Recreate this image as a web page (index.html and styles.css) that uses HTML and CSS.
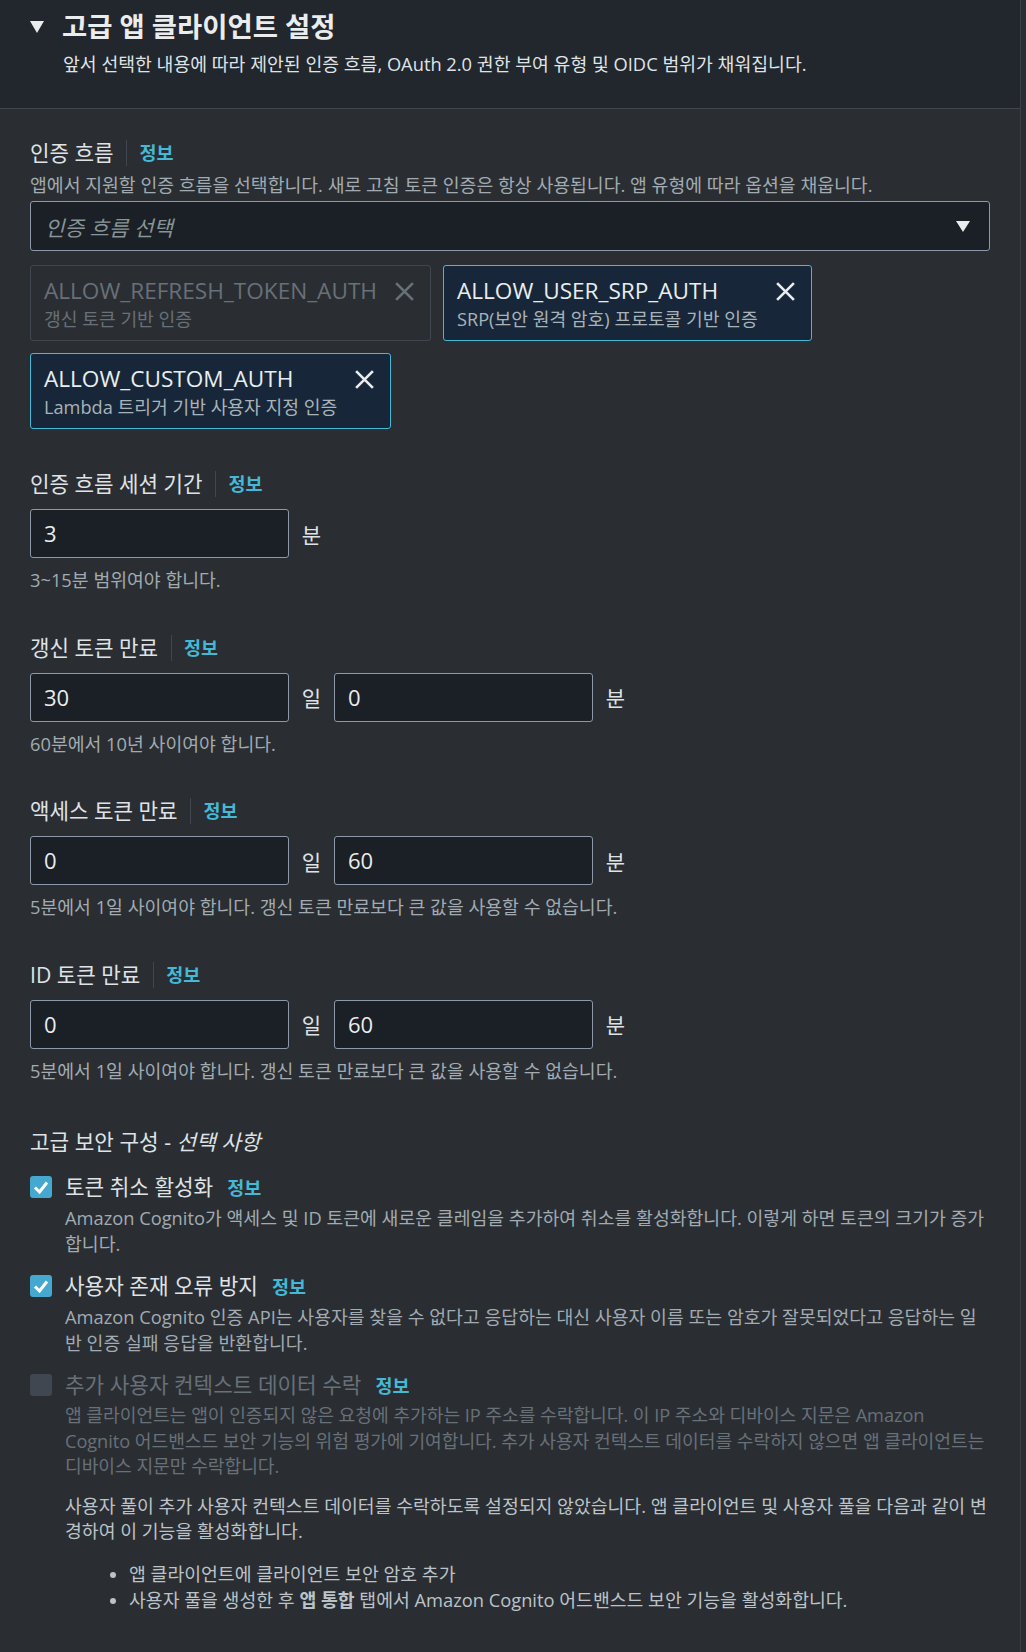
FILE: index.html
```html
<!DOCTYPE html>
<html lang="ko">
<head>
<meta charset="utf-8">
<title>고급 앱 클라이언트 설정</title>
<link rel="stylesheet" href="styles.css">
</head>
<body>
<div class="page">
  <header class="exp-header">
    <div class="exp-title-row">
      <span class="caret"></span>
      <h2 class="exp-title">고급 앱 클라이언트 설정</h2>
    </div>
    <p class="exp-desc">앞서 선택한 내용에 따라 제안된 인증 흐름, OAuth 2.0 권한 부여 유형 및 OIDC 범위가 채워집니다.</p>
  </header>

  <div class="content">
    <section class="field">
      <div class="label-row"><span class="label">인증 흐름</span><span class="divider"></span><a class="info">정보</a></div>
      <div class="desc">앱에서 지원할 인증 흐름을 선택합니다. 새로 고침 토큰 인증은 항상 사용됩니다. 앱 유형에 따라 옵션을 채웁니다.</div>
      <div class="select">
        <span class="placeholder">인증 흐름 선택</span>
        <span class="select-caret"></span>
      </div>
      <div class="tokens">
        <div class="token disabled">
          <div class="token-text">
            <div class="token-title">ALLOW_REFRESH_TOKEN_AUTH</div>
            <div class="token-sub">갱신 토큰 기반 인증</div>
          </div>
          <svg class="token-x" viewBox="0 0 20 20"><path d="M2 2 L18 18 M18 2 L2 18"/></svg>
        </div>
        <div class="token">
          <div class="token-text">
            <div class="token-title">ALLOW_USER_SRP_AUTH</div>
            <div class="token-sub">SRP(보안 원격 암호) 프로토콜 기반 인증</div>
          </div>
          <svg class="token-x" viewBox="0 0 20 20"><path d="M2 2 L18 18 M18 2 L2 18"/></svg>
        </div>
        <div class="token">
          <div class="token-text">
            <div class="token-title">ALLOW_CUSTOM_AUTH</div>
            <div class="token-sub">Lambda 트리거 기반 사용자 지정 인증</div>
          </div>
          <svg class="token-x" viewBox="0 0 20 20"><path d="M2 2 L18 18 M18 2 L2 18"/></svg>
        </div>
      </div>
    </section>

    <section class="field">
      <div class="label-row"><span class="label">인증 흐름 세션 기간</span><span class="divider"></span><a class="info">정보</a></div>
      <div class="input-row">
        <div class="input">3</div><span class="unit">분</span>
      </div>
      <div class="help">3~15분 범위여야 합니다.</div>
    </section>

    <section class="field">
      <div class="label-row"><span class="label">갱신 토큰 만료</span><span class="divider"></span><a class="info">정보</a></div>
      <div class="input-row">
        <div class="input">30</div><span class="unit">일</span>
        <div class="input">0</div><span class="unit">분</span>
      </div>
      <div class="help">60분에서 10년 사이여야 합니다.</div>
    </section>

    <section class="field">
      <div class="label-row"><span class="label">액세스 토큰 만료</span><span class="divider"></span><a class="info">정보</a></div>
      <div class="input-row">
        <div class="input">0</div><span class="unit">일</span>
        <div class="input">60</div><span class="unit">분</span>
      </div>
      <div class="help">5분에서 1일 사이여야 합니다. 갱신 토큰 만료보다 큰 값을 사용할 수 없습니다.</div>
    </section>

    <section class="field">
      <div class="label-row"><span class="label">ID 토큰 만료</span><span class="divider"></span><a class="info">정보</a></div>
      <div class="input-row">
        <div class="input">0</div><span class="unit">일</span>
        <div class="input">60</div><span class="unit">분</span>
      </div>
      <div class="help">5분에서 1일 사이여야 합니다. 갱신 토큰 만료보다 큰 값을 사용할 수 없습니다.</div>
    </section>

    <section class="security">
      <h3 class="sec-title">고급 보안 구성 - <em>선택 사항</em></h3>

      <div class="check">
        <span class="box checked"><svg viewBox="0 0 22 22"><path d="M5 11.5 L9.5 16 L17 6.5"/></svg></span>
        <div class="check-body">
          <div class="check-label">토큰 취소 활성화<a class="info">정보</a></div>
          <div class="check-desc">Amazon Cognito가 액세스 및 ID 토큰에 새로운 클레임을 추가하여 취소를 활성화합니다. 이렇게 하면 토큰의 크기가 증가합니다.</div>
        </div>
      </div>

      <div class="check">
        <span class="box checked"><svg viewBox="0 0 22 22"><path d="M5 11.5 L9.5 16 L17 6.5"/></svg></span>
        <div class="check-body">
          <div class="check-label">사용자 존재 오류 방지<a class="info">정보</a></div>
          <div class="check-desc">Amazon Cognito 인증 API는 사용자를 찾을 수 없다고 응답하는 대신 사용자 이름 또는 암호가 잘못되었다고 응답하는 일반 인증 실패 응답을 반환합니다.</div>
        </div>
      </div>

      <div class="check disabled">
        <span class="box"></span>
        <div class="check-body">
          <div class="check-label">추가 사용자 컨텍스트 데이터 수락<a class="info">정보</a></div>
          <div class="check-desc">앱 클라이언트는 앱이 인증되지 않은 요청에 추가하는 IP 주소를 수락합니다. 이 IP 주소와 디바이스 지문은 Amazon Cognito 어드밴스드 보안 기능의 위험 평가에 기여합니다. 추가 사용자 컨텍스트 데이터를 수락하지 않으면 앱 클라이언트는 디바이스 지문만 수락합니다.</div>
          <p class="note">사용자 풀이 추가 사용자 컨텍스트 데이터를 수락하도록 설정되지 않았습니다. 앱 클라이언트 및 사용자 풀을 다음과 같이 변경하여 이 기능을 활성화합니다.</p>
          <ul class="bullets">
            <li>앱 클라이언트에 클라이언트 보안 암호 추가</li>
            <li>사용자 풀을 생성한 후 <b>앱 통합</b> 탭에서 Amazon Cognito 어드밴스드 보안 기능을 활성화합니다.</li>
          </ul>
        </div>
      </div>
    </section>
  </div>
</div>
</body>
</html>
```

FILE: styles.css
```css
html, body {
  margin: 0;
  padding: 0;
  background: #2a2e33;
}
body {
  font-family: "Open Sans", "Noto Sans CJK KR", sans-serif;
  color: #d5dbdb;
  width: 1026px;
  height: 1652px;
  overflow: hidden;
}
.page {
  width: 1020px;
  min-height: 1652px;
  border-right: 1px solid #3c4149;
  background: #2a2e33;
}

/* header */
.exp-header {
  background: #22262d;
  border-bottom: 1px solid #41464e;
  padding: 11px 0 31px 30px;
}
.exp-title-row {
  display: flex;
  align-items: center;
  height: 32px;
}
.caret {
  width: 0;
  height: 0;
  border-left: 7.5px solid transparent;
  border-right: 7.5px solid transparent;
  border-top: 12px solid #eaeded;
  margin-right: 18px;
  margin-top: -1px;
}
.exp-title {
  margin: 0;
  font-size: 27.4px;
  font-weight: 700;
  line-height: 32px;
  color: #eaeded;
}
.exp-desc {
  margin: 8px 0 0 33px;
  font-size: 18.3px;
  line-height: 25.5px;
  color: #dfe3e6;
}

/* content */
.content {
  padding: 30px 30px 0 30px;
}
.field + .field {
  margin-top: 41px;
}
.label-row {
  display: flex;
  align-items: center;
  height: 28px;
}
.label {
  font-size: 21.2px;
  line-height: 28px;
  color: #dfe3e6;
}
.divider {
  width: 1px;
  height: 26px;
  background: #414750;
  margin: 0 12px 0 13px;
}
.info {
  font-size: 18.5px;
  font-weight: 700;
  color: #44b9d6;
  line-height: 28px;
}
.desc {
  margin-top: 5px;
  font-size: 18.3px;
  line-height: 25.5px;
  color: #a1abb1;
}
.select {
  margin-top: 4px;
  height: 50px;
  box-sizing: border-box;
  border: 1px solid #8d99a8;
  border-radius: 3px;
  background: #1b1f26;
  display: flex;
  align-items: center;
  justify-content: space-between;
  padding: 0 19px 0 14px;
}
.placeholder {
  font-style: italic;
  font-size: 21.2px;
  color: #879596;
}
.select-caret {
  width: 0;
  height: 0;
  border-left: 7.5px solid transparent;
  border-right: 7.5px solid transparent;
  border-top: 11px solid #eaeded;
}
.tokens {
  margin-top: 14px;
  display: flex;
  flex-wrap: wrap;
  gap: 12px 12px;
}
.token {
  display: flex;
  align-items: flex-start;
  gap: 17px;
  box-sizing: border-box;
  height: 76px;
  padding: 9px 15px 0 13px;
  border: 1px solid #44b9d6;
  border-radius: 3px;
  background: #172739;
}
.token-title {
  font-size: 22.6px;
  line-height: 32px;
  color: #eaeded;
  white-space: nowrap;
}
.token-sub {
  font-size: 18.2px;
  line-height: 25.5px;
  color: #a8b3b8;
  white-space: nowrap;
}
.token-x {
  width: 21px;
  height: 21px;
  margin-top: 6px;
  fill: none;
  stroke: #eaeded;
  stroke-width: 2.5;
}
.token.disabled {
  background: transparent;
  border-color: #414750;
}
.token.disabled .token-title,
.token.disabled .token-sub {
  color: #687078;
}
.token.disabled .token-x {
  stroke: #687078;
}

.input-row {
  margin-top: 11px;
  display: flex;
  align-items: center;
}
.input {
  width: 259px;
  height: 49px;
  box-sizing: border-box;
  border: 1px solid #8d99a8;
  border-radius: 3px;
  background: #1b1f26;
  padding: 0 13px;
  font-size: 22px;
  line-height: 47px;
  color: #eaeded;
}
.unit {
  width: 45px;
  text-align: center;
  font-size: 21px;
  color: #dfe3e6;
}
.help {
  margin-top: 9px;
  font-size: 18.3px;
  line-height: 25.5px;
  color: #a1abb1;
}

/* security */
.security {
  margin-top: 45px;
}
.sec-title {
  margin: 0;
  font-size: 21.3px;
  font-weight: 400;
  line-height: 28px;
  color: #dfe3e6;
}
.sec-title em {
  font-style: italic;
}
.check {
  display: flex;
  margin-top: 16px;
}
.security .sec-title + .check {
  margin-top: 17px;
}
.box {
  flex: none;
  width: 22px;
  height: 22px;
  box-sizing: border-box;
  border-radius: 3px;
  margin-top: 3px;
  margin-right: 13px;
  background: #414750;
}
.box.checked {
  background: #44a8d0;
}
.box svg {
  display: block;
  width: 22px;
  height: 22px;
  fill: none;
  stroke: #ffffff;
  stroke-width: 3;
}
.check-body {
  flex: 1;
}
.check-label {
  font-size: 21.3px;
  line-height: 28px;
  color: #dfe3e6;
}
.check-label .info {
  margin-left: 14px;
}
.check-desc {
  margin-top: 3px;
  font-size: 18.3px;
  line-height: 25.5px;
  color: #a1abb1;
}
.check.disabled .check-label,
.check.disabled .check-desc {
  color: #687078;
}
.check.disabled .check-desc {
  font-size: 18.2px;
  letter-spacing: -0.05px;
}
.note {
  margin: 13px 0 0;
  font-size: 18.3px;
  line-height: 25.5px;
  color: #bcc3c8;
}
.bullets {
  list-style: none;
  margin: 17px 0 0;
  padding: 0 0 0 45px;
  font-size: 18.3px;
  line-height: 26px;
  color: #bcc3c8;
}
.bullets li::before {
  content: "";
  display: inline-block;
  vertical-align: middle;
  width: 6px;
  height: 6px;
  border-radius: 50%;
  background: #bcc3c8;
  margin: -2px 13px 0 0;
}
.bullets b {
  font-weight: 700;
}
```
